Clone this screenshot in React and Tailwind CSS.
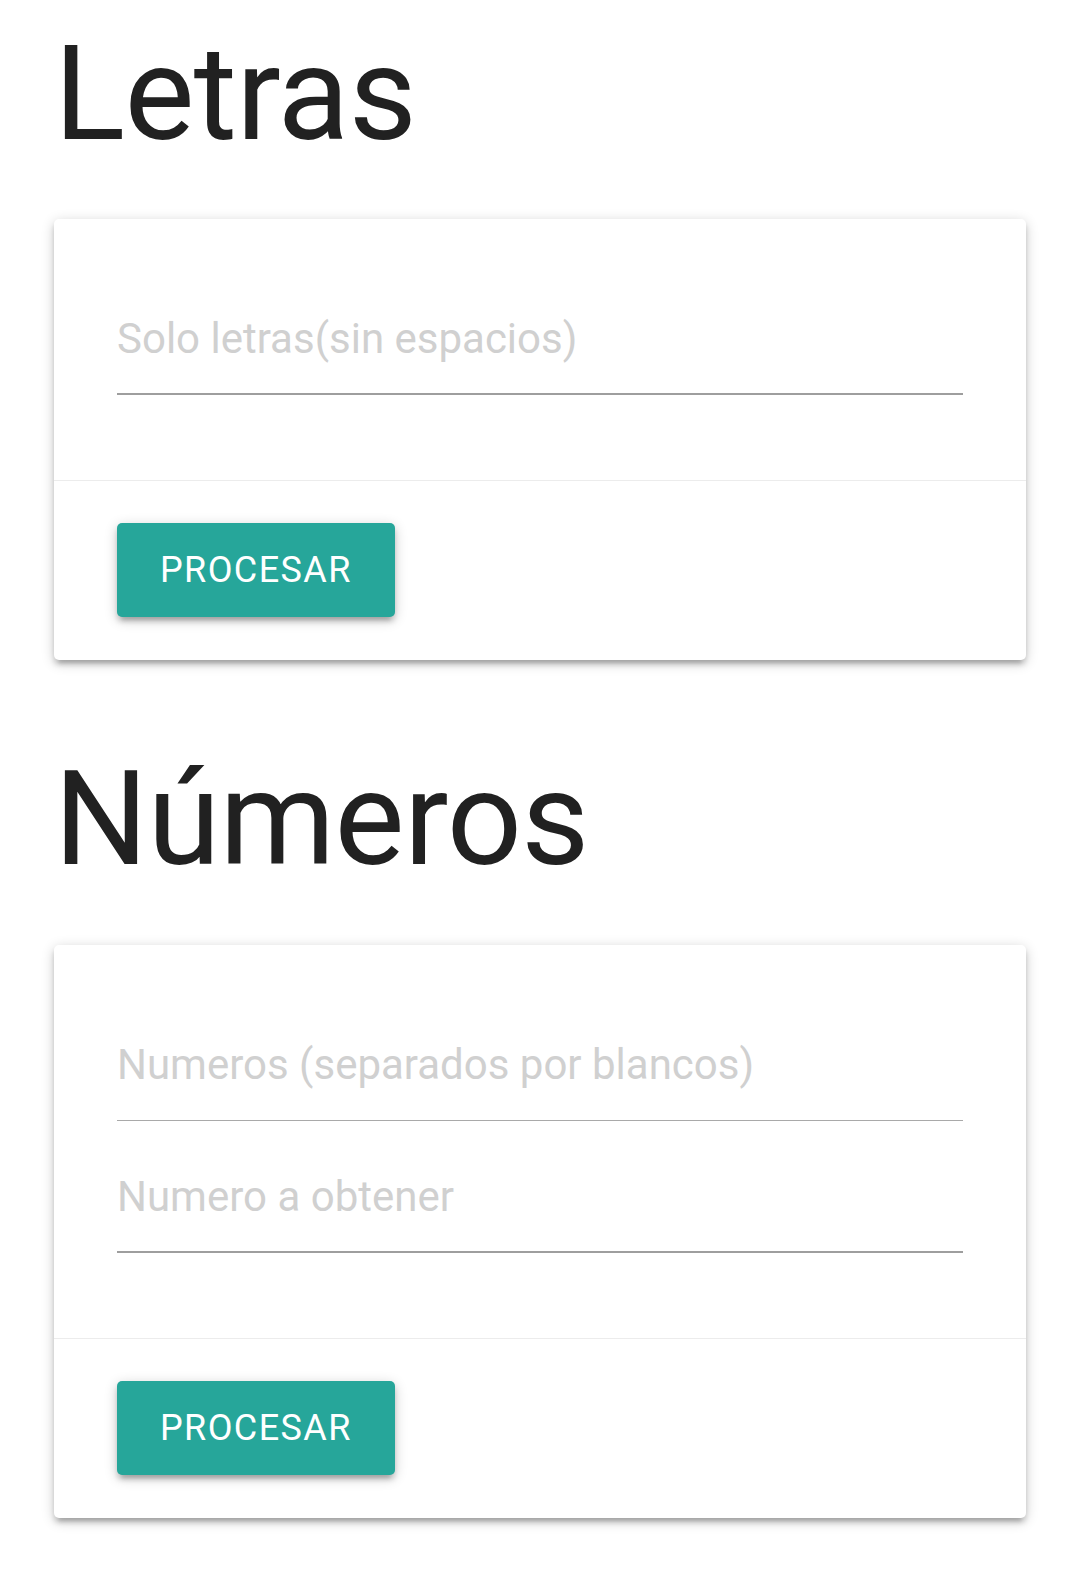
import React from 'react';

const Field = ({ placeholder, thin }) => (
  <input
    type="text"
    placeholder={placeholder}
    className={`block w-full h-[112px] bg-transparent outline-none text-[42px] text-[#212121] placeholder:text-[#d0d0d0] ${
      thin ? 'border-b border-[#a9a9a9] pb-px' : 'border-b-2 border-[#9e9e9e]'
    }`}
  />
);

const Card = ({ children }) => (
  <div className="bg-white rounded-[5px] shadow-[0_5px_5px_0_rgba(0,0,0,0.14),0_8px_3px_-5px_rgba(0,0,0,0.12),0_3px_13px_0_rgba(0,0,0,0.2)]">
    <div className="px-[63px] pt-[64px] pb-[85px] flex flex-col gap-[20px]">{children}</div>
    <div className="border-t border-[#ececec] px-[63px] pt-[42px] pb-[43px]">
      <button className="h-[94px] px-[43px] rounded-[5px] bg-[#26a69a] text-white text-[36px] tracking-[1.4px] uppercase shadow-[0_5px_5px_0_rgba(0,0,0,0.14),0_8px_3px_-5px_rgba(0,0,0,0.12),0_3px_13px_0_rgba(0,0,0,0.2)]">
        Procesar
      </button>
    </div>
  </div>
);

export default function App() {
  return (
    <div className="min-h-screen bg-white px-[54px] pb-[55px] font-['Roboto','Liberation_Sans',sans-serif]">
      <h1 className="pt-[28px] text-[132px] leading-none tracking-[-0.7px] text-[#212121]">Letras</h1>
      <div className="mt-[59px]">
        <Card>
          <Field placeholder="Solo letras(sin espacios)" />
        </Card>
      </div>

      <h1 className="mt-[93px] text-[132px] leading-none tracking-[-0.7px] text-[#212121]">Números</h1>
      <div className="mt-[60px]">
        <Card>
          <Field placeholder="Numeros (separados por blancos)" thin />
          <Field placeholder="Numero a obtener" />
        </Card>
      </div>
    </div>
  );
}
